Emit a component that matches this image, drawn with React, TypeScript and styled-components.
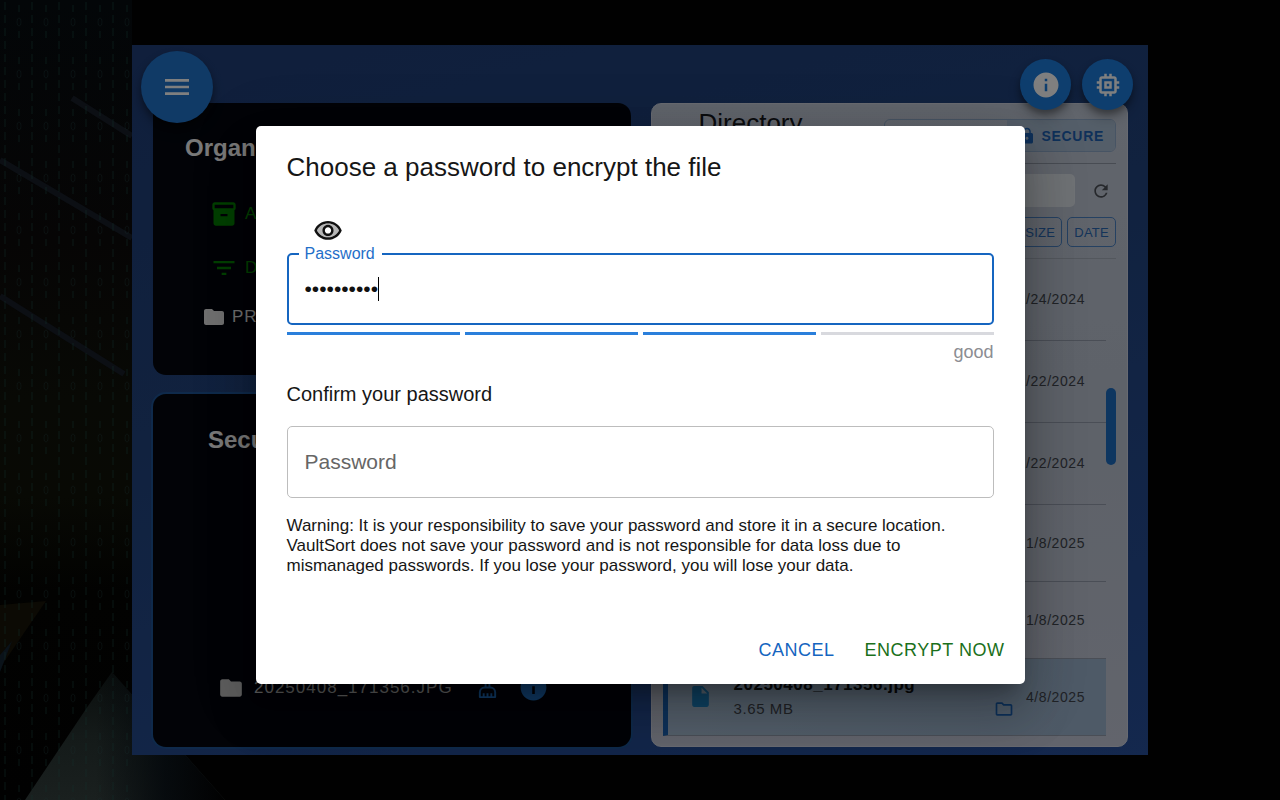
import React from "react";
import styled, { createGlobalStyle, css } from "styled-components";
import {
  MdMenu,
  MdInfo,
  MdMemory,
  MdInventory2,
  MdFilterList,
  MdFolder,
  MdOutlineFolder,
  MdLock,
  MdRefresh,
  MdInsertDriveFile,
} from "react-icons/md";

const GlobalStyle = createGlobalStyle`
  *, *::before, *::after { box-sizing: border-box; }
  body {
    margin: 0;
    background: #010101;
    font-family: "Liberation Sans", Helvetica, Arial, sans-serif;
  }
  button, input { font-family: inherit; }
  h1, h2, p, ul { margin: 0; padding: 0; }
`;

const Page = styled.div`
  position: relative;
  display: flex;
  min-height: 100vh;
  padding: 45px 132px;
  overflow: hidden;
`;

const BackdropArt = styled.svg`
  position: absolute;
  inset: 0;
  width: 100%;
  height: 100%;
`;

const AppWindow = styled.main`
  position: relative;
  flex: 1;
  display: flex;
  flex-direction: column;
  background: linear-gradient(165deg, #203e78 0%, #22447e 40%, #28509c 100%);
  overflow: hidden;
`;

const Header = styled.header`
  position: relative;
  z-index: 1;
  display: flex;
  justify-content: space-between;
  align-items: flex-start;
  height: 58px;
  padding: 6px 15px 0 9px;
`;

const HeaderActions = styled.div`
  display: flex;
  gap: 11px;
  padding-top: 8px;
`;

const RoundButton = styled.button<{ $large?: boolean }>`
  display: flex;
  flex: none;
  align-items: center;
  justify-content: center;
  width: ${(p) => (p.$large ? 72 : 51)}px;
  height: ${(p) => (p.$large ? 72 : 51)}px;
  padding: 0;
  border: 0;
  border-radius: 50%;
  background: ${(p) => (p.$large ? "#2074cc" : "#1c7cdc")};
  color: #fff;
  box-shadow: 0 4px 6px rgba(0, 0, 0, 0.3), 0 8px 13px rgba(0, 0, 0, 0.2);
`;

const Columns = styled.div`
  flex: 1;
  display: grid;
  grid-template-columns: 1fr 1fr;
  gap: 20px;
  padding: 0 20px 8px 21px;
`;

const LeftColumn = styled.div`
  display: flex;
  flex-direction: column;
  gap: 19px;
`;

const DarkPanel = styled.section<{ $outlined?: boolean }>`
  display: flex;
  flex-direction: column;
  padding: 31px 32px 45px;
  border-radius: 13px;
  background: #04070f;
  ${(p) =>
    p.$outlined &&
    css`
      flex: 1;
      padding: 32px 55px 44px;
      box-shadow: 0 0 0 2px #1e5496;
    `}
`;

const PanelTitle = styled.h2`
  font-size: 24px;
  line-height: 28px;
  font-weight: 700;
  color: #f2f2f2;
`;

const ActionList = styled.div`
  display: flex;
  flex-direction: column;
  gap: 26px;
  padding: 38px 0 23px 25px;
`;

const ActionButton = styled.button`
  display: flex;
  align-items: center;
  gap: 7px;
  padding: 0;
  border: 0;
  background: none;
  color: #007f00;
  font-size: 17px;
  line-height: 20px;
  letter-spacing: 1px;
`;

const FolderLine = styled.div`
  display: flex;
  align-items: center;
  gap: 6px;
  padding: 0 0 1px 17px;
  color: #dedede;
  font-size: 17px;
  line-height: 24px;
  letter-spacing: 1px;
`;

const SecuredFile = styled.div`
  display: flex;
  align-items: center;
  margin-top: auto;
  padding-left: 10px;
  color: #bdbdbd;
  font-size: 17px;
  line-height: 20px;
  letter-spacing: 1px;
`;

const SecuredName = styled.span`
  margin: 0 23px 0 10px;
`;

const IconButton = styled.button`
  display: flex;
  padding: 0;
  border: 0;
  background: none;
  color: #2074cc;

  & + & {
    margin-left: 19px;
  }
`;

const Directory = styled.section`
  display: flex;
  flex-direction: column;
  padding: 0 11px 10px;
  border-radius: 10px;
  border: 1px solid #d0d5e2;
  background: linear-gradient(180deg, #c2cad8, #bcc4d2 50%, #c4c9d8);
`;

const DirectoryHead = styled.div`
  display: flex;
  justify-content: space-between;
  align-items: flex-start;
  height: 60px;
  padding: 4px 0 0 36px;
  border-bottom: 1px solid #9199a6;
`;

const DirectoryTitle = styled.h2`
  font-size: 26px;
  line-height: 30px;
  font-weight: 400;
  color: #16181d;
`;

const Segments = styled.div`
  display: flex;
  height: 33px;
  margin-top: 11px;
  border: 1px solid #8fa9c8;
  border-radius: 6px;
  overflow: hidden;
`;

const Segment = styled.button<{ $active?: boolean }>`
  display: flex;
  align-items: center;
  gap: 5px;
  min-width: ${(p) => (p.$active ? 0 : 122)}px;
  padding: 0 11px;
  border: 0;
  background: ${(p) => (p.$active ? "#a9bdd2" : "transparent")};
  color: #1e62b4;
  font-size: 14px;
  font-weight: 700;
  letter-spacing: 0.05em;
`;

const SearchRow = styled.div`
  display: flex;
  align-items: center;
  gap: 11px;
  padding: 10px 0;
`;

const SearchInput = styled.input`
  flex: 1;
  min-width: 0;
  height: 33px;
  border: 0;
  border-radius: 5px;
  background: #dfe4ea;
`;

const RefreshButton = styled.button`
  display: flex;
  justify-content: center;
  width: 30px;
  padding: 0;
  border: 0;
  background: none;
  color: #4c5158;
`;

const SortRow = styled.div`
  display: flex;
  justify-content: flex-end;
  gap: 5px;
  padding-bottom: 11px;
`;

const SortButton = styled.button`
  height: 30px;
  padding: 0 6px;
  border: 1px solid #4a82c4;
  border-radius: 5px;
  background: none;
  color: #2a68b4;
  font-size: 13px;
  letter-spacing: 0.02em;
`;

const ListArea = styled.div`
  flex: 1;
  display: flex;
  border-top: 1px solid #a7aebb;
`;

const FileList = styled.ul`
  flex: 1;
  display: flex;
  flex-direction: column;
  list-style: none;
`;

const FileRow = styled.li<{ $tall?: boolean; $selected?: boolean }>`
  flex: ${(p) => (p.$tall ? 82 : 77)} 1 0;
  display: flex;
  align-items: center;
  padding-right: 21px;
  border-bottom: 1px solid #949dac;
  color: #42464e;
  font-size: 14px;
  ${(p) =>
    p.$selected &&
    css`
      padding-left: 20px;
      border-left: 5px solid #1a62b4;
      background: linear-gradient(90deg, #a9bfd6, #9cb4ce);
    `}
`;

const FileText = styled.div`
  flex: 1;
  margin-left: 21px;
`;

const FileName = styled.div`
  font-size: 17px;
  line-height: 24px;
  font-weight: 700;
  letter-spacing: 0.03em;
  color: #0e1014;
`;

const FileSize = styled.div`
  font-size: 15px;
  line-height: 24px;
  letter-spacing: 0.04em;
`;

const OpenFolder = styled.span`
  display: flex;
  align-self: flex-end;
  margin: 0 12px 16px 0;
  color: #1a62b4;
`;

const FileDate = styled.time`
  margin-left: auto;
  letter-spacing: 0.04em;
`;

const ScrollTrack = styled.div`
  width: 10px;
  padding-top: 129px;
`;

const ScrollThumb = styled.div`
  height: 77px;
  border-radius: 5px;
  background: #1c6cc0;
`;

const Scrim = styled.div`
  position: absolute;
  inset: 0;
  z-index: 2;
  display: flex;
  align-items: center;
  justify-content: center;
  padding-top: 10px;
  background: rgba(0, 0, 0, 0.5);
`;

const Dialog = styled.form`
  width: 100%;
  max-width: 769px;
  border-radius: 5px;
  background: #fff;
  color: #161616;
  box-shadow: 0 14px 19px -9px rgba(0, 0, 0, 0.3), 0 30px 48px 4px rgba(0, 0, 0, 0.16),
    0 11px 58px 10px rgba(0, 0, 0, 0.14);
`;

const DialogTitle = styled.h1`
  padding: 21px 31px 20px;
  font-size: 26px;
  line-height: 41px;
  font-weight: 400;
`;

const DialogBody = styled.div`
  display: flex;
  flex-direction: column;
  padding: 0 31px 20px;
`;

const EyeButton = styled.button`
  display: flex;
  align-self: flex-start;
  padding: 8px 26px 7px;
  border: 0;
  background: none;
  color: #111;
`;

const Field = styled.div`
  position: relative;
  display: flex;
`;

const TextInput = styled.input<{ $active?: boolean }>`
  flex: 1;
  min-width: 0;
  height: 72px;
  padding: 0 ${(p) => (p.$active ? 16 : 17)}px;
  border: ${(p) => (p.$active ? "2px solid #1565c0" : "1px solid #bdbdbd")};
  border-radius: 5px;
  outline: 0;
  background: #fff;
  color: #111;
  font-size: 21px;

  &::placeholder {
    color: #666;
    opacity: 1;
  }
`;

const FloatingLabel = styled.label`
  position: absolute;
  top: -9px;
  left: 12px;
  padding: 0 7px 0 6px;
  background: #fff;
  color: #1f6fc9;
  font-size: 16px;
  line-height: 20px;
`;

const Caret = styled.span`
  position: absolute;
  top: 24px;
  left: 91px;
  width: 1px;
  height: 24px;
  background: #000;
`;

const StrengthMeter = styled.div`
  display: grid;
  grid-template-columns: repeat(4, 1fr);
  gap: 5px;
  margin-top: 7px;
`;

const StrengthBar = styled.span<{ $filled: boolean }>`
  height: 3px;
  background: ${(p) => (p.$filled ? "#2a7fdb" : "#d8d9de")};
`;

const StrengthText = styled.p`
  margin-top: 7px;
  color: #8c8d92;
  font-size: 18px;
  line-height: 20px;
  text-align: right;
`;

const ConfirmLabel = styled.label`
  margin: 20px 0;
  font-size: 20px;
  line-height: 24px;
`;

const Warning = styled.p`
  margin-top: 18px;
  font-size: 17px;
  line-height: 20px;
`;

const DialogActions = styled.div`
  display: flex;
  justify-content: flex-end;
  gap: 10px;
  padding: 30px 10px 10px;
`;

const TextButton = styled.button<{ $color: string }>`
  height: 48px;
  padding: 0 10px;
  border: 0;
  border-radius: 5px;
  background: none;
  color: ${(p) => p.$color};
  font-size: 18px;
  letter-spacing: 0.02857em;
`;

const EyeIcon = () => (
  <svg width="30" height="30" viewBox="0 0 24 24" fill="currentColor" aria-hidden="true">
    <path
      opacity=".3"
      d="M12 6c-3.79 0-7.17 2.13-8.82 5.5C4.83 14.87 8.21 17 12 17s7.17-2.13 8.82-5.5C19.17 8.13 15.79 6 12 6zm0 10c-2.48 0-4.5-2.02-4.5-4.5S9.52 7 12 7s4.5 2.02 4.5 4.5S14.48 16 12 16z"
    />
    <path d="M12 4C7 4 2.73 7.11 1 11.5 2.73 15.89 7 19 12 19s9.27-3.11 11-7.5C21.27 7.11 17 4 12 4zm0 13c-3.79 0-7.17-2.13-8.82-5.5C4.83 8.13 8.21 6 12 6s7.17 2.13 8.82 5.5C19.17 14.87 15.79 17 12 17zm0-10c-2.48 0-4.5 2.02-4.5 4.5S9.52 16 12 16s4.5-2.02 4.5-4.5S14.48 7 12 7zm0 7c-1.38 0-2.5-1.12-2.5-2.5S10.62 9 12 9s2.5 1.12 2.5 2.5S13.38 14 12 14z" />
  </svg>
);

const BrushIcon = () => (
  <svg
    width="23"
    height="23"
    viewBox="0 0 24 24"
    fill="none"
    stroke="currentColor"
    strokeWidth="2"
    strokeLinejoin="round"
    aria-hidden="true"
  >
    <path d="M10 12V3a1 1 0 0 1 1-1h2a1 1 0 0 1 1 1v9" />
    <path d="M4 22v-5a5 5 0 0 1 5-5h6a5 5 0 0 1 5 5v5z" />
    <path d="M8 22v-4M12 22v-4M16 22v-4" />
  </svg>
);

const Backdrop = () => (
  <BackdropArt viewBox="0 0 1280 800" preserveAspectRatio="xMidYMid slice" aria-hidden="true">
    <defs>
      <linearGradient id="left-glow" x1="0" x2="0" y1="0" y2="1">
        <stop offset="0" stopColor="#030608" />
        <stop offset=".3" stopColor="#060505" />
        <stop offset=".5" stopColor="#080905" />
        <stop offset=".62" stopColor="#080904" />
        <stop offset=".74" stopColor="#020201" />
        <stop offset="1" stopColor="#010101" />
      </linearGradient>
      <linearGradient id="wedge" x1="0" x2="0" y1="0" y2="1">
        <stop offset="0" stopColor="#0a0e0d" />
        <stop offset=".5" stopColor="#141a19" />
        <stop offset="1" stopColor="#1a201f" />
      </linearGradient>
      <linearGradient id="wedge-fade" x1="0" x2="1" y1="0" y2="0">
        <stop offset=".35" stopColor="#02060a" stopOpacity="0" />
        <stop offset=".7" stopColor="#02060a" stopOpacity=".8" />
        <stop offset="1" stopColor="#010101" />
      </linearGradient>
      <pattern id="rain" width="27" height="52" patternUnits="userSpaceOnUse">
        <path
          d="M5 2v8M5 15v8M5 28v8M5 41v8M19 5v7M19 31v7"
          stroke="#12312b"
          strokeOpacity=".45"
          strokeWidth="1"
        />
        <ellipse cx="19" cy="22" rx="2" ry="4" fill="none" stroke="#12312b" strokeOpacity=".25" />
      </pattern>
    </defs>
    <rect width="1280" height="800" fill="#010101" />
    <rect width="132" height="800" fill="url(#left-glow)" />
    <path d="M0 605l46 -4L0 668z" fill="#0c0a04" />
    <path d="M0 655l12 -14L0 672z" fill="#0a1219" />
    <path d="M72 98l60 38M0 160l132 78M0 296l124 78" stroke="#0c0f14" strokeWidth="6" fill="none" />
    <path d="M25 800L88 706L112 672L225 800z" fill="url(#wedge)" />
    <path d="M25 800L88 706L112 672L225 800z" fill="url(#wedge-fade)" />
    <rect width="132" height="800" fill="url(#rain)" />
  </BackdropArt>
);

const OLDER_FILES = [
  { date: "12/24/2024", tall: true },
  { date: "12/22/2024", tall: true },
  { date: "12/22/2024", tall: true },
  { date: "1/8/2025", tall: false },
  { date: "1/8/2025", tall: false },
];

export default function App() {
  const [password, setPassword] = React.useState("vaultsort1");
  const [confirmation, setConfirmation] = React.useState("");

  return (
    <>
      <GlobalStyle />
      <Page>
        <Backdrop />
        <AppWindow>
          <Header>
            <RoundButton $large aria-label="Menu">
              <MdMenu size={32} />
            </RoundButton>
            <HeaderActions>
              <RoundButton aria-label="Information">
                <MdInfo size={30} />
              </RoundButton>
              <RoundButton aria-label="System">
                <MdMemory size={30} />
              </RoundButton>
            </HeaderActions>
          </Header>

          <Columns>
            <LeftColumn>
              <DarkPanel>
                <PanelTitle>Organize</PanelTitle>
                <ActionList>
                  <ActionButton>
                    <MdInventory2 size={28} />A
                  </ActionButton>
                  <ActionButton>
                    <MdFilterList size={28} />D
                  </ActionButton>
                </ActionList>
                <FolderLine>
                  <MdFolder size={24} />
                  PR
                </FolderLine>
              </DarkPanel>
              <DarkPanel $outlined>
                <PanelTitle>Secure</PanelTitle>
                <SecuredFile>
                  <MdFolder size={26} />
                  <SecuredName>20250408_171356.JPG</SecuredName>
                  <IconButton aria-label="Clean up">
                    <BrushIcon />
                  </IconButton>
                  <IconButton aria-label="File information">
                    <MdInfo size={31} />
                  </IconButton>
                </SecuredFile>
              </DarkPanel>
            </LeftColumn>

            <Directory>
              <DirectoryHead>
                <DirectoryTitle>Directory</DirectoryTitle>
                <Segments>
                  <Segment aria-label="Browse" />
                  <Segment $active>
                    <MdLock size={18} />
                    SECURE
                  </Segment>
                </Segments>
              </DirectoryHead>
              <SearchRow>
                <SearchInput type="search" aria-label="Search files" />
                <RefreshButton aria-label="Refresh">
                  <MdRefresh size={20} />
                </RefreshButton>
              </SearchRow>
              <SortRow>
                <SortButton>SIZE</SortButton>
                <SortButton>DATE</SortButton>
              </SortRow>
              <ListArea>
                <FileList>
                  {OLDER_FILES.map((file, i) => (
                    <FileRow key={i} $tall={file.tall}>
                      <FileDate>{file.date}</FileDate>
                    </FileRow>
                  ))}
                  <FileRow $selected>
                    <MdInsertDriveFile size={25} color="#1f86c8" />
                    <FileText>
                      <FileName>20250408_171356.jpg</FileName>
                      <FileSize>3.65 MB</FileSize>
                    </FileText>
                    <OpenFolder>
                      <MdOutlineFolder size={20} />
                    </OpenFolder>
                    <FileDate>4/8/2025</FileDate>
                  </FileRow>
                </FileList>
                <ScrollTrack>
                  <ScrollThumb />
                </ScrollTrack>
              </ListArea>
            </Directory>
          </Columns>

          <Scrim>
            <Dialog role="dialog" aria-labelledby="dialog-title" onSubmit={(e) => e.preventDefault()}>
              <DialogTitle id="dialog-title">Choose a password to encrypt the file</DialogTitle>
              <DialogBody>
                <EyeButton type="button" aria-label="Show password">
                  <EyeIcon />
                </EyeButton>
                <Field>
                  <TextInput
                    $active
                    id="password"
                    type="password"
                    value={password}
                    onChange={(e) => setPassword(e.target.value)}
                  />
                  <FloatingLabel htmlFor="password">Password</FloatingLabel>
                  <Caret />
                </Field>
                <StrengthMeter>
                  {[1, 2, 3, 4].map((level) => (
                    <StrengthBar key={level} $filled={level <= 3} />
                  ))}
                </StrengthMeter>
                <StrengthText>good</StrengthText>
                <ConfirmLabel htmlFor="confirm">Confirm your password</ConfirmLabel>
                <Field>
                  <TextInput
                    id="confirm"
                    type="password"
                    placeholder="Password"
                    value={confirmation}
                    onChange={(e) => setConfirmation(e.target.value)}
                  />
                </Field>
                <Warning>
                  Warning: It is your responsibility to save your password and store it in a secure
                  location. VaultSort does not save your password and is not responsible for data
                  loss due to mismanaged passwords. If you lose your password, you will lose your
                  data.
                </Warning>
              </DialogBody>
              <DialogActions>
                <TextButton type="button" $color="#1565c0">
                  CANCEL
                </TextButton>
                <TextButton type="submit" $color="#1b701b">
                  ENCRYPT NOW
                </TextButton>
              </DialogActions>
            </Dialog>
          </Scrim>
        </AppWindow>
      </Page>
    </>
  );
}
